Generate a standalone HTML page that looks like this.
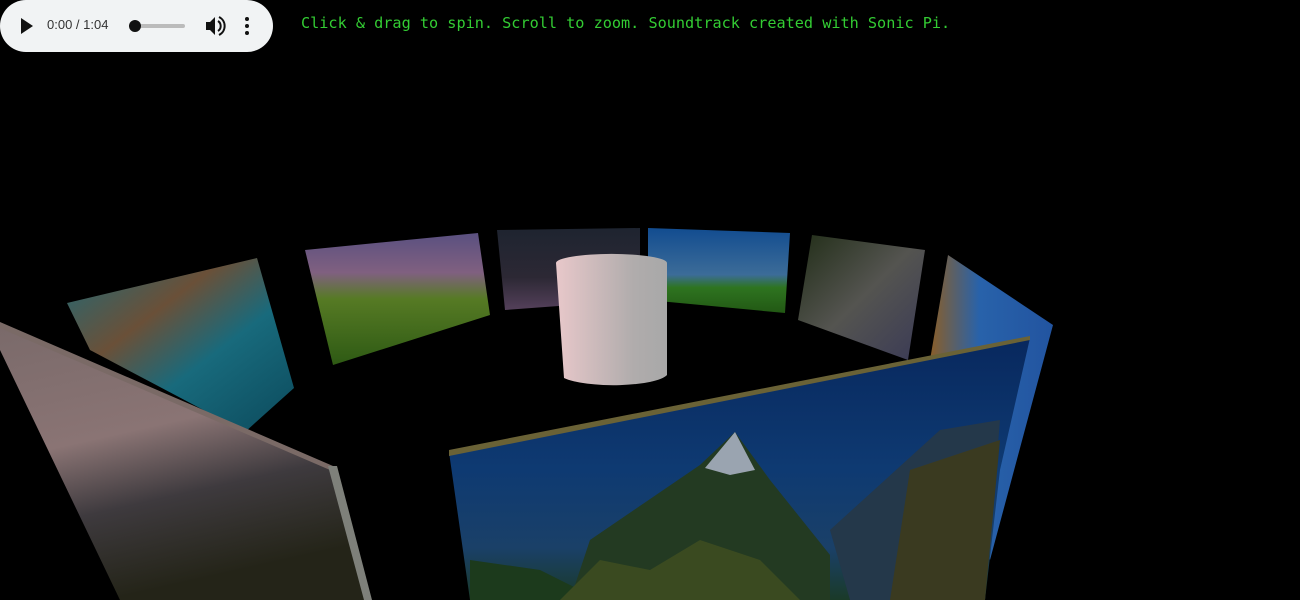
<!DOCTYPE html>
<html><head><meta charset="utf-8"><style>
html,body{margin:0;padding:0;background:#000;width:1300px;height:600px;overflow:hidden}
.player{position:absolute;left:0;top:0;width:273px;height:52px;background:#f1f3f4;border-radius:26px}
.txt{position:absolute;left:301px;top:14px;font-family:"DejaVu Sans Mono","Liberation Mono",monospace;font-size:15.2px;color:#33cc33;white-space:pre}
.time{position:absolute;left:47px;top:17px;font-family:"Liberation Sans",sans-serif;font-size:13px;color:#333}
svg{position:absolute;left:0;top:0}
</style></head><body>
<svg width="1300" height="600">
<defs>
<linearGradient id="cyl" x1="0" x2="1"><stop offset="0" stop-color="#e8c8ca"/><stop offset="0.7" stop-color="#b0acac"/><stop offset="1" stop-color="#a8a8a8"/></linearGradient>
<linearGradient id="p1" x1="0" y1="0" x2="0.3" y2="1"><stop offset="0" stop-color="#7a6a6a"/><stop offset="0.45" stop-color="#8a7474"/><stop offset="0.7" stop-color="#3e3a3e"/><stop offset="1" stop-color="#242418"/></linearGradient>
<linearGradient id="p2" x1="0" y1="0" x2="1" y2="1"><stop offset="0" stop-color="#1e6a78"/><stop offset="0.35" stop-color="#6a5038"/><stop offset="0.6" stop-color="#186a7c"/><stop offset="1" stop-color="#0c4a5c"/></linearGradient>
<linearGradient id="p3" x1="0" y1="0" x2="0" y2="1"><stop offset="0" stop-color="#5a5080"/><stop offset="0.3" stop-color="#806080"/><stop offset="0.5" stop-color="#567a24"/><stop offset="1" stop-color="#2e5a14"/></linearGradient>
<linearGradient id="p4" x1="0" y1="0" x2="0" y2="1"><stop offset="0" stop-color="#1e2430"/><stop offset="0.6" stop-color="#2c2834"/><stop offset="1" stop-color="#54405a"/></linearGradient>
<linearGradient id="p5" x1="0" y1="0" x2="0" y2="1"><stop offset="0" stop-color="#124c90"/><stop offset="0.55" stop-color="#3c6c98"/><stop offset="0.7" stop-color="#2e7420"/><stop offset="1" stop-color="#225814"/></linearGradient>
<linearGradient id="p6" x1="0" y1="0" x2="1" y2="1"><stop offset="0" stop-color="#222e18"/><stop offset="0.5" stop-color="#545450"/><stop offset="1" stop-color="#3a3a56"/></linearGradient>
<linearGradient id="p7" x1="0" y1="0" x2="1" y2="0"><stop offset="0" stop-color="#8a5e28"/><stop offset="0.4" stop-color="#2862aa"/><stop offset="1" stop-color="#2254a0"/></linearGradient>
<linearGradient id="p9" x1="0" y1="0" x2="0" y2="1"><stop offset="0" stop-color="#08285e"/><stop offset="0.5" stop-color="#0e3a72"/><stop offset="0.8" stop-color="#1a4068"/><stop offset="1" stop-color="#1a3a28"/></linearGradient>
</defs>
<polygon points="67,303 257,258 294,388 245,432 90,350" fill="url(#p2)"/>
<polygon points="305,250 478,233 490,315 333,365" fill="url(#p3)"/>
<polygon points="497,230 640,228 640,300 505,310" fill="url(#p4)"/>
<polygon points="648,228 790,233 785,313 648,300" fill="url(#p5)"/>
<polygon points="812,235 925,250 908,360 798,320" fill="url(#p6)"/>
<polygon points="948,255 1053,325 990,560 930,360" fill="url(#p7)"/>
<path d="M556,263 A55,9 0 0 1 667,263 L667,375 A55,13 0 0 1 564,378 Z" fill="url(#cyl)"/>
<polygon points="0,326 330,468 367,600 120,600 0,350" fill="url(#p1)"/>
<polygon points="0,322 333,466 330,470 0,328" fill="#7a6a66"/>
<polygon points="328,466 337,466 372,600 364,600" fill="#7e807a"/>
<polygon points="449,452 1030,338 1000,470 985,600 470,600" fill="url(#p9)"/>
<polygon points="449,450 1030,336 1030,340 449,456" fill="#6a6236"/>
<polygon points="590,540 700,465 735,432 770,480 830,555 830,600 570,600" fill="#233a22"/>
<polygon points="705,468 735,432 755,470 730,475" fill="#9aa4b0"/>
<polygon points="830,530 940,430 1000,420 985,600 850,600" fill="#24384a"/>
<polygon points="470,560 540,570 600,600 470,600" fill="#1c3a1c"/>
<polygon points="910,470 1000,440 985,600 890,600" fill="#3a3a20"/>
<polygon points="560,600 600,560 650,570 700,540 760,560 800,600" fill="#3a4a20"/>
</svg>
<div class="player">
<svg width="273" height="52" style="position:absolute;left:0;top:0">
<polygon points="21,18 21,34 33,26" fill="#111"/>
<line x1="136" y1="26" x2="183" y2="26" stroke="#bbb" stroke-width="4" stroke-linecap="round"/>
<circle cx="135" cy="26" r="6" fill="#111"/>
<polygon points="206,22 210,22 215,17 215,35 210,30 206,30" fill="#111"/>
<path d="M218,21 A6,6 0 0 1 218,31" stroke="#111" stroke-width="2" fill="none"/>
<path d="M219,17 A10,10 0 0 1 219,35" stroke="#111" stroke-width="2" fill="none"/>
<circle cx="247" cy="19" r="2" fill="#111"/><circle cx="247" cy="26" r="2" fill="#111"/><circle cx="247" cy="33" r="2" fill="#111"/>
</svg>
<div class="time">0:00 / 1:04</div>
</div>
<div class="txt">Click &amp; drag to spin. Scroll to zoom. Soundtrack created with Sonic Pi.</div>
</body></html>
